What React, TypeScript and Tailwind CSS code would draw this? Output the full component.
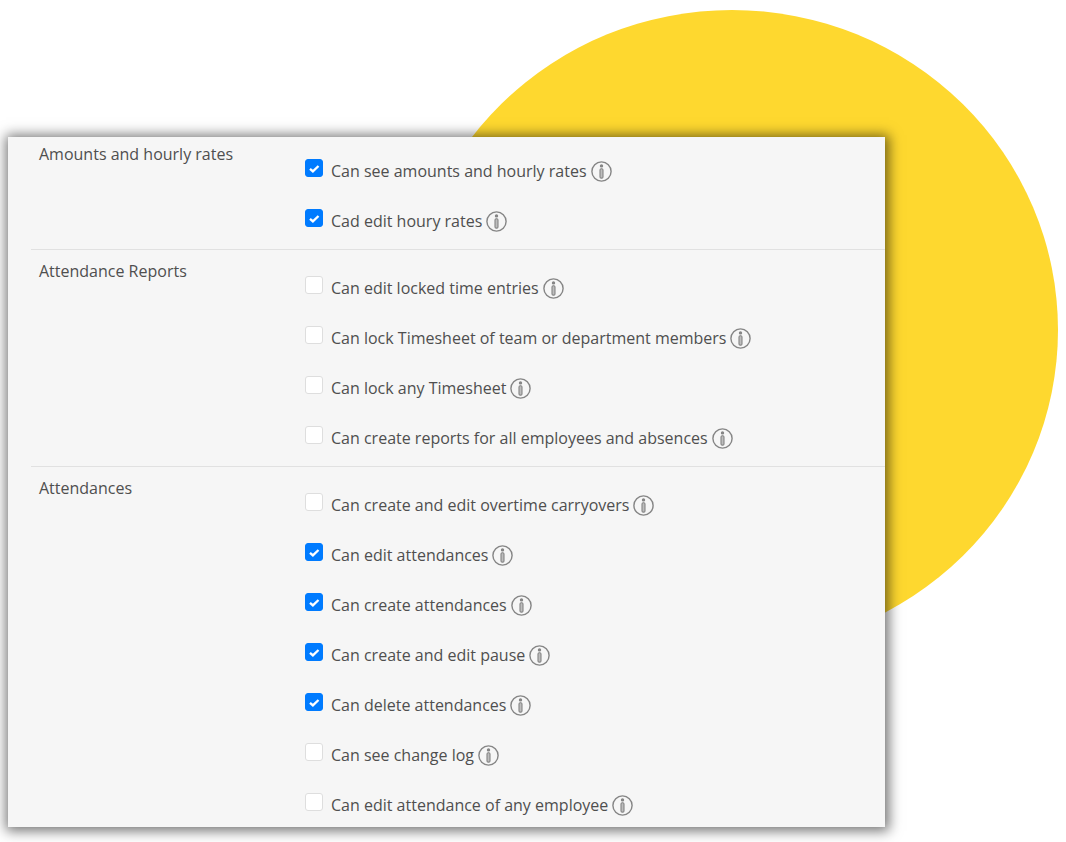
import { useState } from "react";

type Permission = {
  id: string;
  label: string;
  enabled: boolean;
};

type PermissionGroup = {
  id: string;
  title: string;
  permissions: Permission[];
};

const initialGroups: PermissionGroup[] = [
  {
    id: "rates",
    title: "Amounts and hourly rates",
    permissions: [
      { id: "see-rates", label: "Can see amounts and hourly rates", enabled: true },
      { id: "edit-rates", label: "Cad edit houry rates", enabled: true },
    ],
  },
  {
    id: "reports",
    title: "Attendance Reports",
    permissions: [
      { id: "edit-locked", label: "Can edit locked time entries", enabled: false },
      {
        id: "lock-team",
        label: "Can lock Timesheet of team or department members",
        enabled: false,
      },
      { id: "lock-any", label: "Can lock any Timesheet", enabled: false },
      {
        id: "create-reports",
        label: "Can create reports for all employees and absences",
        enabled: false,
      },
    ],
  },
  {
    id: "attendances",
    title: "Attendances",
    permissions: [
      {
        id: "overtime",
        label: "Can create and edit overtime carryovers",
        enabled: false,
      },
      { id: "edit", label: "Can edit attendances", enabled: true },
      { id: "create", label: "Can create attendances", enabled: true },
      { id: "pause", label: "Can create and edit pause", enabled: true },
      { id: "delete", label: "Can delete attendances", enabled: true },
      { id: "log", label: "Can see change log", enabled: false },
      { id: "edit-any", label: "Can edit attendance of any employee", enabled: false },
    ],
  },
];

function InfoIcon() {
  return (
    <svg viewBox="0 0 21 21" className="size-[21px]" fill="none" stroke="#858585">
      <circle cx="10.5" cy="10.5" r="9.6" strokeWidth="1.4" />
      <circle cx="10.5" cy="4.9" r="1.7" fill="#858585" stroke="none" />
      <rect x="9" y="7.7" width="3" height="9.4" rx="1.2" fill="#bdbdbd" strokeWidth="1.1" />
    </svg>
  );
}

function PermissionRow({
  permission,
  onToggle,
}: {
  permission: Permission;
  onToggle: () => void;
}) {
  return (
    <li className="flex h-[50px] items-start">
      <span className="relative mr-2 size-[18px] shrink-0">
        <input
          id={permission.id}
          type="checkbox"
          checked={permission.enabled}
          onChange={onToggle}
          className="peer block size-[18px] appearance-none rounded-[3px] border border-[#dedede] bg-white checked:border-[#007bff] checked:bg-[#007bff]"
        />
        <svg
          viewBox="0 0 18 18"
          className="pointer-events-none absolute inset-0 hidden peer-checked:block"
          fill="none"
          stroke="white"
          strokeWidth="2.3"
        >
          <path d="M5 9.8l2.9 2.6 5.6-5.4" />
        </svg>
      </span>
      <label htmlFor={permission.id} className="text-base leading-6 text-[#4f4f4f]">
        {permission.label}
      </label>
      <button type="button" aria-label="More information" className="mt-[2px] ml-1 shrink-0">
        <InfoIcon />
      </button>
    </li>
  );
}

export default function App() {
  const [groups, setGroups] = useState(initialGroups);

  const handleToggle = (id: string) => {
    setGroups((prev) =>
      prev.map((group) => ({
        ...group,
        permissions: group.permissions.map((p) =>
          p.id === id ? { ...p, enabled: !p.enabled } : p
        ),
      }))
    );
  };

  return (
    <div className="relative min-h-screen overflow-hidden bg-white pt-[137px] pr-[17%] pb-[15px] pl-2 font-['Open_Sans',sans-serif]">
      <div className="absolute top-[10px] right-2 h-[640px] w-[652px] rounded-[50%] bg-[#fed82f]" />
      <main className="relative bg-[#f6f6f6] pl-[23px] shadow-[1px_1px_12px_3px_rgba(0,0,0,0.55)]">
        {groups.map((group) => (
          <section
            key={group.id}
            aria-labelledby={group.id}
            className="group flex border-b border-[#e1e1e1] pt-[9px] first:pt-[5px] last:border-b-0"
          >
            <h2
              id={group.id}
              className="w-[274px] shrink-0 pl-2 text-base leading-6 text-[#4f4f4f]"
            >
              {group.title}
            </h2>
            <ul className="-mb-[10px] min-w-0 flex-1 pt-[17px] group-last:-mb-4">
              {group.permissions.map((permission) => (
                <PermissionRow
                  key={permission.id}
                  permission={permission}
                  onToggle={() => handleToggle(permission.id)}
                />
              ))}
            </ul>
          </section>
        ))}
      </main>
    </div>
  );
}
